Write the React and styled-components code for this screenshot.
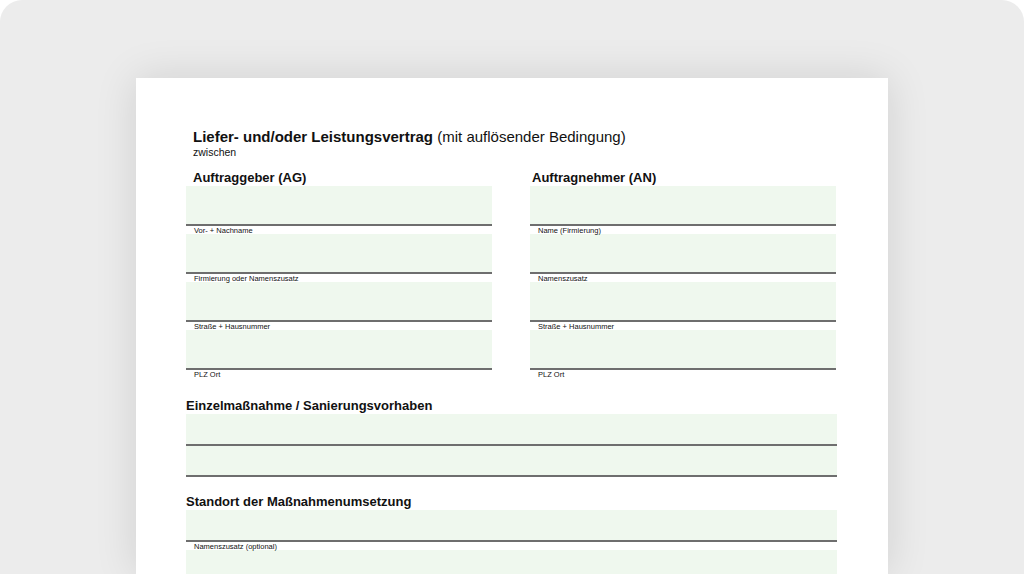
import React from "react";
import styled, { createGlobalStyle } from "styled-components";

const Global = createGlobalStyle`
  body { margin: 0; background: #fff; font-family: "Liberation Sans", Arial, sans-serif; }
`;

const Frame = styled.div`
  width: 1024px;
  height: 574px;
  background: #ececec;
  border-radius: 22px 22px 0 0;
  overflow: hidden;
  display: flex;
  justify-content: center;
  padding-top: 78px;
  box-sizing: border-box;
`;

const Page = styled.div`
  width: 752px;
  background: #fff;
  box-shadow: 0 0 40px rgba(0, 0, 0, 0.12);
  padding: 50px 51px 0 50px;
  box-sizing: border-box;
  color: #111;
`;

const Title = styled.div`
  font-size: 15px;
  font-weight: bold;
  padding-left: 7px;
  line-height: 18px;
  span { font-weight: normal; }
`;

const Sub = styled.div`
  font-size: 10.5px;
  padding-left: 7px;
  line-height: 12px;
  margin-bottom: 12px;
`;

const Columns = styled.div`
  display: grid;
  grid-template-columns: 306px 306px;
  column-gap: 38px;
`;

const Heading = styled.div`
  font-size: 13px;
  font-weight: bold;
  line-height: 16px;
  padding-left: ${({ $indent }) => $indent || 0}px;
  margin-top: ${({ $top }) => $top || 0}px;
`;

const Field = styled.div`
  height: ${({ $h }) => $h || 38}px;
  background: #eff8ee;
  border-bottom: 2px solid #6e6e6e;
`;

const Label = styled.div`
  font-size: 7.5px;
  line-height: 8px;
  padding: 1px 0 0 8px;
  height: 7px;
  overflow: visible;
`;

const Row = ({ label, h }) => (
  <>
    <Field $h={h} />
    <Label>{label}</Label>
  </>
);

const Column = ({ title, labels, indent }) => (
  <div>
    <Heading $indent={indent}>{title}</Heading>
    {labels.map((l) => (
      <Row key={l} label={l} />
    ))}
  </div>
);

export default function App() {
  return (
    <>
      <Global />
      <Frame>
        <Page>
          <Title>
            Liefer- und/oder Leistungsvertrag <span>(mit auflösender Bedingung)</span>
          </Title>
          <Sub>zwischen</Sub>
          <Columns>
            <Column
              title="Auftraggeber (AG)"
              indent={7}
              labels={["Vor- + Nachname", "Firmierung oder Namenszusatz", "Straße + Hausnummer", "PLZ Ort"]}
            />
            <Column
              title="Auftragnehmer (AN)"
              indent={2}
              labels={["Name (Firmierung)", "Namenszusatz", "Straße + Hausnummer", "PLZ Ort "]}
            />
          </Columns>
          <Heading $top={20}>Einzelmaßnahme / Sanierungsvorhaben</Heading>
          <Field $h={30} />
          <Field $h={29} />
          <Heading $top={17}>Standort der Maßnahmenumsetzung</Heading>
          <Row label="Namenszusatz (optional)" h={30} />
          <Field $h={30} />
        </Page>
      </Frame>
    </>
  );
}
